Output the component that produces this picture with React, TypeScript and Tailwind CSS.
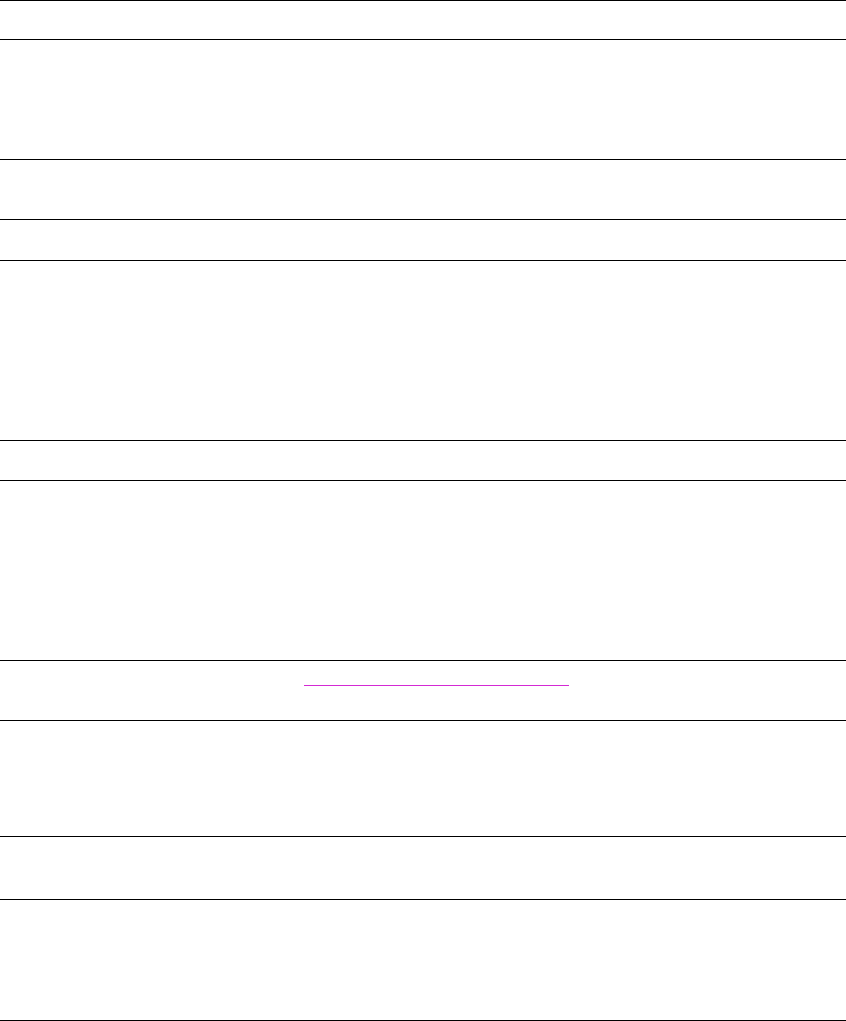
const rows: { h: string; link?: boolean }[] = [
  { h: 'h-[40px] border-t' },
  { h: 'h-[120px]' },
  { h: 'h-[60px]' },
  { h: 'h-[41px]' },
  { h: 'h-[180px]' },
  { h: 'h-[40px]' },
  { h: 'h-[180px]' },
  { h: 'h-[60px]', link: true },
  { h: 'h-[116px]' },
  { h: 'h-[63px]' },
  { h: 'h-[121px]' },
];

export default function App() {
  return (
    <div className="w-full bg-white font-['Liberation_Sans',sans-serif]">
      {rows.map((r, i) => (
        <div key={i} className={`${r.h} border-b border-black box-border`}>
          {r.link && (
            <div className="ml-[304px] pt-[24px]">
              <div className="w-[265px] h-px bg-[#d42ad4]" />
            </div>
          )}
        </div>
      ))}
    </div>
  );
}
